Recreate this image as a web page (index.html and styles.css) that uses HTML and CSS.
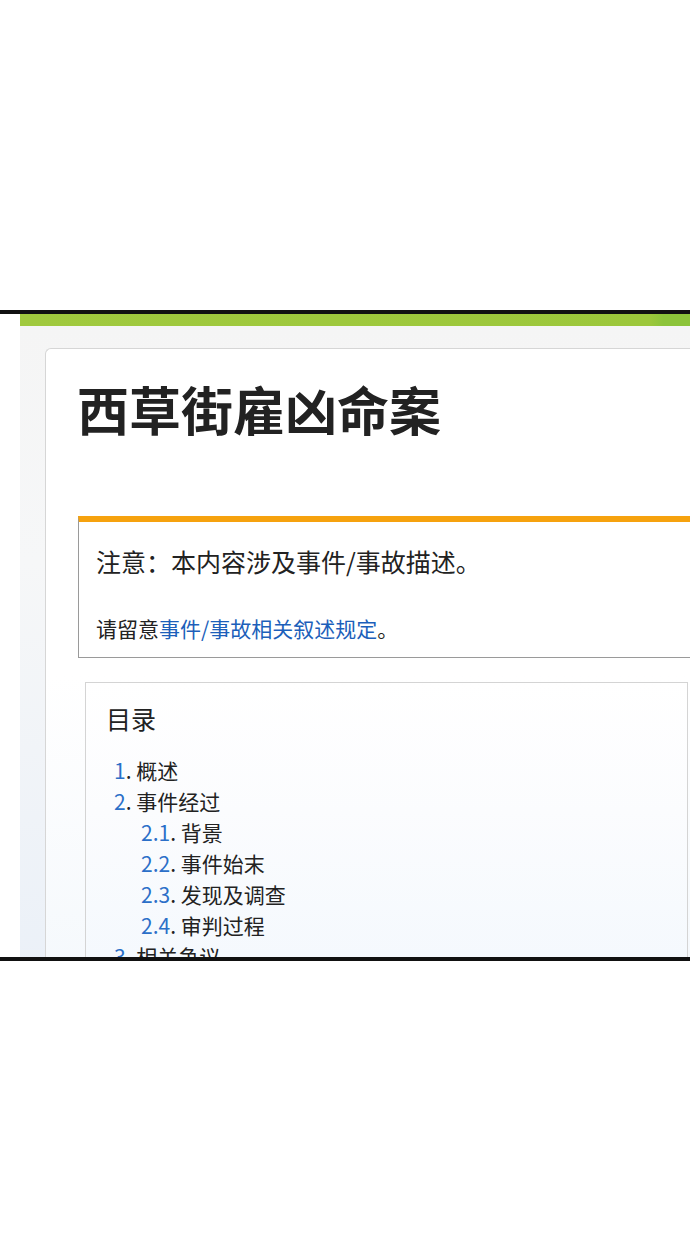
FILE: index.html
```html
<!DOCTYPE html>
<html lang="zh">
<head>
<meta charset="utf-8">
<title>西草街雇凶命案</title>
<link rel="stylesheet" href="styles.css">
</head>
<body>
<div class="frame">
  <div class="site">
    <div class="greenbar"></div>
    <div class="stage">
      <div class="card">
        <h1 class="title">西草街雇凶命案</h1>
        <div class="notice">
          <p class="notice-main">注意：本内容涉及事件/事故描述。</p>
          <p class="notice-sub">请留意<a class="link" href="#">事件/事故相关叙述规定</a>。</p>
        </div>
        <div class="toc">
          <div class="toc-title">目录</div>
          <ul class="toc-list">
            <li class="toc-item"><span class="num">1</span>. 概述</li>
            <li class="toc-item"><span class="num">2</span>. 事件经过</li>
            <li class="toc-item sub"><span class="num">2.1</span>. 背景</li>
            <li class="toc-item sub"><span class="num">2.2</span>. 事件始末</li>
            <li class="toc-item sub"><span class="num">2.3</span>. 发现及调查</li>
            <li class="toc-item sub"><span class="num">2.4</span>. 审判过程</li>
            <li class="toc-item"><span class="num">3</span>. 相关争议</li>
            <li class="toc-item"><span class="num">4</span>. 参考资料</li>
          </ul>
        </div>
      </div>
    </div>
  </div>
</div>
</body>
</html>
```
FILE: styles.css
```css
html, body {
  margin: 0;
  padding: 0;
  background: #ffffff;
}
body {
  font-family: "Noto Sans CJK SC", "Noto Sans", sans-serif;
  color: #222222;
  height: 1257px;
  overflow: hidden;
}
.frame {
  margin-top: 310px;
  border-top: 4px solid #111111;
  border-bottom: 4px solid #111111;
  height: 643px;
  overflow: hidden;
  background: #ffffff;
}
.site {
  margin-left: 20px;
  height: 100%;
  display: flex;
  flex-direction: column;
}
.greenbar {
  height: 12px;
  flex: none;
  background: linear-gradient(90deg, #a0c93e 0%, #9cc73b 94%, #8cc43a 96%, #8cc43a 100%);
}
.stage {
  flex: 1;
  padding: 22px 0 0 25px;
  background: linear-gradient(180deg, #f5f5f5 0%, #f6f7f8 35%, #eaf0f8 100%);
}
.card {
  margin-right: -60px;
  height: 100%;
  box-sizing: border-box;
  border: 1px solid #d6d6d6;
  border-right: none;
  border-bottom: none;
  border-top-left-radius: 6px;
  background: linear-gradient(180deg, #ffffff 0%, #ffffff 50%, #f4f8fc 100%);
  padding: 30px 0 0 32px;
}
.title {
  margin: 0;
  font-size: 52px;
  line-height: 60px;
  font-weight: 700;
  color: #222222;
  letter-spacing: 0;
  margin-left: -1px;
}
.notice {
  margin-top: 77px;
  border-top: 6px solid #f6a20e;
  border-left: 1px solid #9a9a9a;
  border-bottom: 1px solid #9a9a9a;
  background: #ffffff;
  padding: 22px 0 14px 17px;
}
.notice p {
  margin: 0;
}
.notice-main {
  font-size: 25px;
  line-height: 34px;
}
.notice-sub {
  margin-top: 35px !important;
  font-size: 21px;
  line-height: 30px;
}
.link {
  color: #1c5fba;
  text-decoration: none;
}
.toc {
  margin: 24px 0 0 7px;
  width: 603px;
  border: 1px solid #d4d4d4;
  border-bottom: none;
  background: linear-gradient(180deg, #ffffff 0%, #fbfcfe 40%, #f3f8fd 100%);
  padding: 18px 0 0 20px;
  box-sizing: border-box;
}
.toc-title {
  font-size: 25px;
  line-height: 34px;
}
.toc-list {
  list-style: none;
  margin: 20px 0 0 8px;
  padding: 0;
}
.toc-item {
  font-size: 21px;
  line-height: 31px;
  color: #222222;
}
.toc-item.sub {
  padding-left: 27px;
}
.num {
  color: #2b6fc8;
}
```
